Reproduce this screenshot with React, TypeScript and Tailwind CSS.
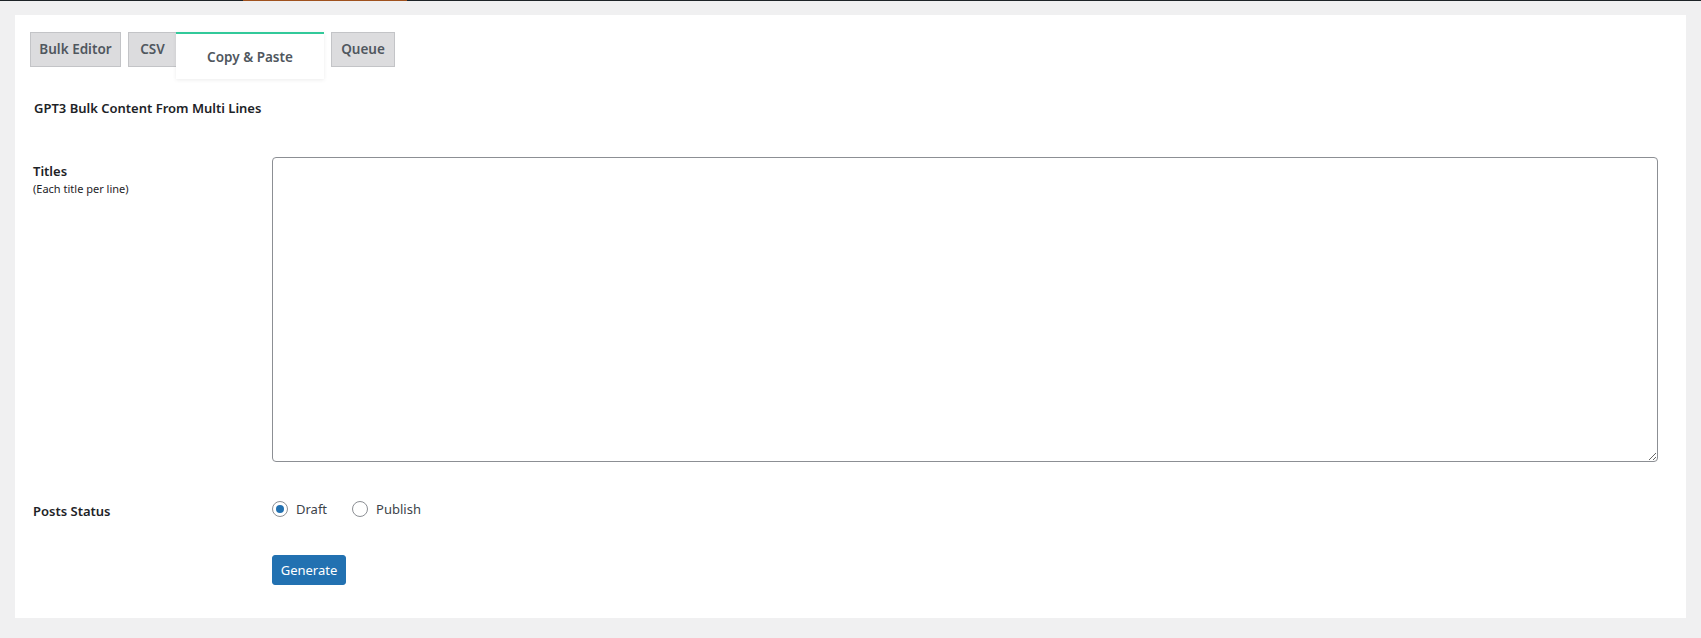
import React, { useState } from "react";

const font = { fontFamily: '"Noto Sans", "Open Sans", Arial, sans-serif' };

function Radio({ checked, label, onClick }: { checked: boolean; label: string; onClick: () => void }) {
  return (
    <button type="button" onClick={onClick} className="flex items-center gap-[8px]">
      <span className="flex h-[16px] w-[16px] items-center justify-center rounded-full border border-[#8c8f94] bg-white">
        {checked && <span className="h-[8px] w-[8px] rounded-full bg-[#2271b1]" />}
      </span>
      <span className="text-[13px] leading-[20px] text-[#3c434a]">{label}</span>
    </button>
  );
}

export default function App() {
  const [status, setStatus] = useState("draft");
  return (
    <div className="min-h-[638px] w-full bg-[#f0f0f1]" style={font}>
      <div className="flex h-px w-full bg-[#1d2327]">
        <div className="ml-[243px] h-px w-[164px] bg-[#a0521e]" />
      </div>
      <div className="mx-[15px] mt-[14px] h-[603px] bg-white pl-[15px] pt-[17px]">
        <div className="flex items-start">
          <div className="flex h-[35px] w-[91px] items-center justify-center whitespace-nowrap border border-[#c3c4c7] bg-[#dcdcde] text-[13.5px] font-semibold text-[#50575e]">
            Bulk Editor
          </div>
          <div className="ml-[7px] flex h-[35px] w-[48px] items-center justify-center whitespace-nowrap border border-r-0 border-[#c3c4c7] bg-[#dcdcde] text-[13.5px] font-semibold text-[#50575e]">
            CSV
          </div>
          <div className="flex h-[47px] w-[148px] items-center justify-center whitespace-nowrap border-t-2 border-[#32c99a] bg-white pt-[2px] text-[13.5px] font-semibold text-[#50575e] shadow-[0_1px_4px_rgba(0,0,0,0.08)]">
            Copy &amp; Paste
          </div>
          <div className="ml-[7px] flex h-[35px] w-[64px] items-center justify-center whitespace-nowrap border border-[#c3c4c7] bg-[#dcdcde] text-[13.5px] font-semibold text-[#50575e]">
            Queue
          </div>
        </div>
        <h2 className="mt-[19px] pl-[4px] text-[13px] font-semibold leading-[20px] text-[#1d2327]">
          GPT3 Bulk Content From Multi Lines
        </h2>
        <div className="mt-[39px] flex pr-[28px]">
          <div className="w-[242px] shrink-0 pl-[3px] pt-[4px]">
            <div className="text-[13px] font-semibold leading-[20px] text-[#1d2327]">Titles</div>
            <div className="text-[11px] leading-[16px] text-[#1d2327]">(Each title per line)</div>
          </div>
          <textarea className="h-[305px] flex-1 rounded-[4px] border border-[#8c8f94] bg-white p-2 text-[14px] text-[#2c3338] outline-none" />
        </div>
        <div className="mt-[35px] flex items-center">
          <div className="w-[242px] shrink-0 pl-[3px] pt-[4px] text-[13px] font-semibold leading-[20px] text-[#1d2327]">
            Posts Status
          </div>
          <div className="flex items-center gap-[25px]">
            <Radio checked={status === "draft"} label="Draft" onClick={() => setStatus("draft")} />
            <Radio checked={status === "publish"} label="Publish" onClick={() => setStatus("publish")} />
          </div>
        </div>
        <div className="mt-[34px] pl-[242px]">
          <button className="h-[30px] w-[74px] rounded-[3px] border border-[#2271b1] bg-[#2271b1] text-[13px] leading-[28px] text-white">
            Generate
          </button>
        </div>
      </div>
    </div>
  );
}
